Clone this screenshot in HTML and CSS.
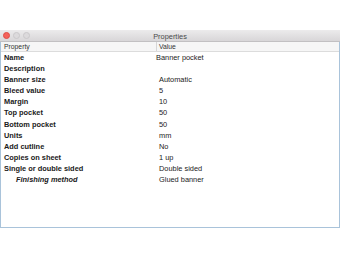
FILE: index.html
```html
<!DOCTYPE html>
<html lang="en">
<head>
  <meta charset="UTF-8" />
  <title>Properties</title>
  <link rel="stylesheet" href="styles.css">
</head>
<body>
  <div class="window">
    <div class="titlebar">
      <div class="lights">
        <span class="light close"></span>
        <span class="light"></span>
        <span class="light"></span>
      </div>
      <div class="title">Properties</div>
    </div>

    <div class="sheet">
      <div class="head">
        <div class="col-name">Property</div>
        <div class="col-value">Value</div>
      </div>

      <div class="row"><div class="col-name">Name</div><div class="col-value field">Banner pocket</div></div>
      <div class="row"><div class="col-name">Description</div><div class="col-value"></div></div>
      <div class="row"><div class="col-name">Banner size</div><div class="col-value">Automatic</div></div>
      <div class="row"><div class="col-name">Bleed value</div><div class="col-value">5</div></div>
      <div class="row"><div class="col-name">Margin</div><div class="col-value">10</div></div>
      <div class="row"><div class="col-name">Top pocket</div><div class="col-value">50</div></div>
      <div class="row"><div class="col-name">Bottom pocket</div><div class="col-value">50</div></div>
      <div class="row"><div class="col-name">Units</div><div class="col-value">mm</div></div>
      <div class="row"><div class="col-name">Add cutline</div><div class="col-value">No</div></div>
      <div class="row"><div class="col-name">Copies on sheet</div><div class="col-value">1 up</div></div>
      <div class="row"><div class="col-name">Single or double sided</div><div class="col-value">Double sided</div></div>
      <div class="row sub"><div class="col-name">Finishing method</div><div class="col-value">Glued banner</div></div>
    </div>
  </div>
</body>
</html>
```

FILE: styles.css
```css
* {
  box-sizing: border-box;
}
body {
  margin: 0;
  padding-top: 30px;
  background-color: white;
  font-family: "Liberation Sans", Arial, sans-serif;
  color: #1a1a1a;
}
.window {
  width: 340px;
  height: 198px;
  display: flex;
  flex-direction: column;
}
.titlebar {
  height: 12px;
  position: relative;
  background: linear-gradient(#ecebec, #d8d6d8);
  border-bottom: 1px solid #c2c0c2;
}
.lights {
  display: flex;
  gap: 3px;
  padding: 2px 0 0 3px;
}
.light {
  width: 7px;
  height: 7px;
  border-radius: 50%;
  background-color: #dcdadc;
  border: 0.5px solid #cac8ca;
}
.light.close {
  background-color: #f4625b;
  border-color: #e04c45;
}
.title {
  position: absolute;
  top: 0;
  left: 0;
  right: 0;
  text-align: center;
  font-size: 7.4px;
  line-height: 13px;
  color: #4a4a4a;
}
.sheet {
  flex: 1;
  border: 1px solid #a9c3da;
  border-top: none;
  background-color: white;
}
.head {
  display: flex;
  height: 10px;
  background-color: #f6f6f6;
  border-bottom: 1px solid #dcdcdc;
  font-size: 6.8px;
  line-height: 9px;
  color: #333;
}
.head .col-value {
  border-left: 1px solid #d6d6d6;
  padding-left: 2px;
}
.col-name {
  width: 155px;
  padding-left: 3px;
}
.row {
  display: flex;
  height: 11.1px;
  font-size: 7.4px;
  line-height: 11.1px;
}
.row .col-name {
  font-weight: bold;
}
.row .col-value {
  padding-left: 3px;
}
.row .field {
  padding-left: 0;
}
.row.sub .col-name {
  padding-left: 15px;
  font-style: italic;
}
```
